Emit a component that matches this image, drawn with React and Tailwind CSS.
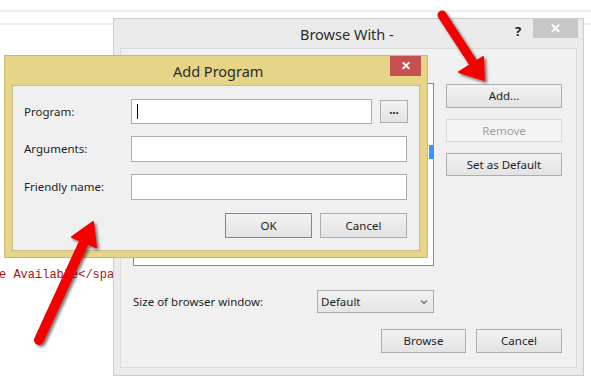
const btn =
  "flex items-center justify-center border border-[#adadad] bg-gradient-to-b from-[#f2f2f2] to-[#e3e3e3] text-[11.5px] text-[#1e1e1e]";

function Arrows() {
  return (
    <svg
      className="absolute left-0 top-0 pointer-events-none"
      width="591"
      height="380"
      viewBox="0 0 591 380"
    >
      <defs>
        <filter id="sh" x="-20%" y="-20%" width="140%" height="140%">
          <feDropShadow dx="2" dy="2" stdDeviation="1.6" floodColor="#000" floodOpacity="0.55" />
        </filter>
      </defs>
      <g filter="url(#sh)" fill="#f40000" stroke="#f40000">
        <line x1="442" y1="15" x2="474" y2="64" strokeWidth="9" strokeLinecap="round" />
        <polygon points="484,80 483,57 459,72" strokeWidth="2" strokeLinejoin="round" />
        <line x1="39" y1="340" x2="84" y2="242" strokeWidth="10" strokeLinecap="round" />
        <polygon points="93,222 96,247 72,237" strokeWidth="2" strokeLinejoin="round" />
      </g>
    </svg>
  );
}

function BrowseWith() {
  return (
    <div className="absolute left-[113px] top-[18px] w-[471px] h-[358px] border border-[#cdcdcd] bg-[#ebebeb] flex flex-col">
      <div className="h-[29px] flex items-center relative">
        <span className="absolute left-[186px] top-[5px] text-[14.5px] text-[#2b2b2b]">Browse With -</span>
        <span className="absolute left-[401px] top-[3px] text-[13px] font-bold text-[#222]">?</span>
        <div className="absolute right-[5px] top-0 w-[45px] h-[19px] bg-[#c7c7c7] flex items-center justify-center text-white text-[13px] font-bold">
          ✕
        </div>
      </div>
      <div className="mx-[6px] h-[320px] border border-[#dcdcdc] bg-[#f0f0f0] flex flex-col pl-[12px] pr-[13px]">
        <div className="flex mt-[34px]">
          <div className="w-[301px] h-[183px] border border-[#828790] bg-white relative">
            <div className="absolute right-0 top-[61px] w-[4px] h-[14px] bg-[#3399ff]" />
          </div>
          <div className="ml-[12px] flex flex-col gap-[11px] pt-[1px]">
            <div className={`${btn} w-[116px] h-[24px]`}>Add...</div>
            <div className="flex items-center justify-center w-[116px] h-[23px] border border-[#d9d9d9] bg-[#f4f4f4] text-[11.5px] text-[#a0a0a0]">
              Remove
            </div>
            <div className={`${btn} w-[116px] h-[23px]`}>Set as Default</div>
          </div>
        </div>
        <div className="flex items-center mt-[24px]">
          <span className="w-[184px] text-[11.5px] text-[#1e1e1e]">Size of browser window:</span>
          <div className="w-[117px] h-[23px] border border-[#acacac] bg-gradient-to-b from-[#f2f2f2] to-[#e5e5e5] flex items-center justify-between pl-[3px] pr-[5px] text-[11.5px] text-[#1e1e1e]">
            <span>Default</span>
            <svg width="8" height="6" viewBox="0 0 8 6">
              <path d="M1 1.5 L4 4.5 L7 1.5" fill="none" stroke="#777" strokeWidth="1.5" />
            </svg>
          </div>
        </div>
        <div className="flex justify-end gap-[10px] mt-[16px] mr-[1px]">
          <div className={`${btn} w-[85px] h-[24px]`}>Browse</div>
          <div className={`${btn} w-[86px] h-[24px]`}>Cancel</div>
        </div>
      </div>
    </div>
  );
}

function Field({ label, children }) {
  return (
    <div className="flex items-center">
      <span className="w-[107px] text-[11.5px] text-[#1e1e1e]">{label}</span>
      {children}
    </div>
  );
}

function AddProgram() {
  return (
    <div className="absolute left-[4px] top-[55px] w-[424px] h-[203px] border border-[#c9b972] bg-[#e6d586] flex flex-col">
      <div className="h-[29px] relative">
        <span className="absolute left-[168px] top-[5px] text-[14.5px] text-[#2b2b2b]">Add Program</span>
        <div className="absolute right-[6px] top-0 w-[31px] h-[20px] bg-[#c75050] flex items-center justify-center text-white text-[12px] font-bold">
          ✕
        </div>
      </div>
      <div className="mx-[7px] h-[166px] border border-[#c8bd8c] bg-[#f0f0f0] flex flex-col pl-[11px] pt-[13px] gap-[12px]">
        <Field label="Program:">
          <div className="w-[241px] h-[25px] border border-[#abadb3] bg-white flex items-center pl-[5px]">
            <div className="w-px h-[15px] bg-black" />
          </div>
          <div className={`${btn} ml-[8px] w-[28px] h-[23px] pb-[4px] font-bold`}>...</div>
        </Field>
        <Field label="Arguments:">
          <div className="w-[276px] h-[26px] border border-[#abadb3] bg-white" />
        </Field>
        <Field label="Friendly name:">
          <div className="w-[276px] h-[26px] border border-[#abadb3] bg-white" />
        </Field>
        <div className="flex justify-end gap-[8px] pr-[12px] mt-[1px]">
          <div className={`${btn} w-[87px] h-[25px] !border-[#3399ff]`}>OK</div>
          <div className={`${btn} w-[87px] h-[25px]`}>Cancel</div>
        </div>
      </div>
    </div>
  );
}

export default function App() {
  return (
    <div className="relative w-[591px] h-[380px] bg-white overflow-hidden font-['Noto_Sans','Open_Sans',sans-serif]">
      <div className="h-[10px]" />
      <div className="h-[2px] bg-[#efefef]" />
      <div className="h-[11px]" />
      <div className="h-[2px] bg-[#efefef]" />
      <div className="mt-[241px] -ml-[1px] font-['Liberation_Mono',monospace] text-[12px] text-[#a31515] whitespace-nowrap">
        e Available&lt;/span&gt;
      </div>
      <BrowseWith />
      <AddProgram />
      <Arrows />
    </div>
  );
}
